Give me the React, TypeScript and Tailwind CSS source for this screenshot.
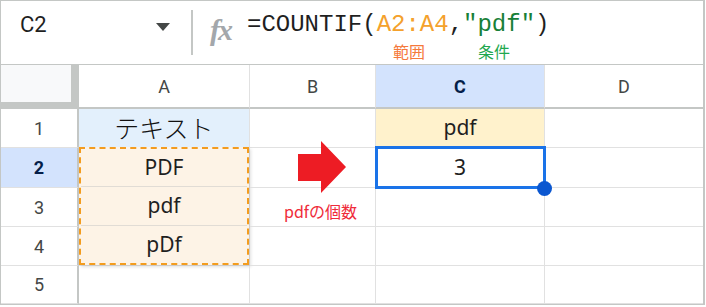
import React from "react";

const headFont = { fontFamily: "Roboto, 'Liberation Sans', Arial, sans-serif" };

function ColHead({ label, active, last }: { label: string; active?: boolean; last?: boolean }) {
  return (
    <div
      className={`flex items-center justify-center border-b-2 border-b-[#c4c7c5] text-[18px] ${
        last ? "" : "border-r border-r-[#e1e1e1]"
      } ${active ? "bg-[#d3e3fd] font-bold text-[#041e49]" : "text-[#444746]"}`}
      style={headFont}
    >
      {label}
    </div>
  );
}

function RowHead({ n, active }: { n: number; active?: boolean }) {
  return (
    <div
      className={`flex items-center justify-center border-r-2 border-r-[#c4c7c5] border-b border-b-[#e1e1e1] text-[18px] ${
        active ? "bg-[#d3e3fd] font-bold text-[#041e49]" : "text-[#444746]"
      }`}
      style={headFont}
    >
      {n}
    </div>
  );
}

function Cell({ className = "", children }: { className?: string; children?: React.ReactNode }) {
  return (
    <div className={`flex items-center justify-center border-r border-b border-[#e1e1e1] ${className}`}>
      {children}
    </div>
  );
}

export default function App() {
  return (
    <div
      className="relative w-[705px] h-[305px] bg-white border border-r-2 border-[#c4c7c5] flex flex-col overflow-hidden text-[#1f1f1f]"
      style={{ fontFamily: "'Noto Sans', 'Noto Sans CJK JP', sans-serif" }}
    >
      {/* formula bar */}
      <div className="h-[64px] shrink-0 border-b border-[#c4c7c5] flex items-start">
        <div className="w-[190px] h-full flex items-start pt-[9px] pl-[19px]">
          <span className="text-[22px] leading-[30px] text-[#1f1f1f]" style={headFont}>
            C2
          </span>
          <span className="ml-auto mr-[21px] mt-[13px] w-0 h-0 border-l-[7px] border-r-[7px] border-t-[8px] border-l-transparent border-r-transparent border-t-[#444746]" />
        </div>
        <div className="w-[2px] h-[45px] mt-[9px] bg-[#c4c7c5]" />
        <div
          className="ml-[17px] mt-[12px] text-[30px] leading-[34px] italic font-bold text-[#a3a7ab] tracking-[-2px]"
          style={{ fontFamily: "'Liberation Serif', 'DejaVu Serif', serif" }}
        >
          fx
        </div>
        <div className="ml-[16px] flex flex-col">
          <div
            className="text-[24px] leading-[30px] mt-[9px] whitespace-pre"
            style={{ fontFamily: "'Liberation Mono', 'DejaVu Sans Mono', monospace" }}
          >
            <span>=COUNTIF(</span>
            <span className="text-[#f4a12c]">A2:A4</span>
            <span>,</span>
            <span className="text-[#188038]">"pdf"</span>
            <span>)</span>
          </div>
          <div className="flex text-[16px] leading-[20px] mt-[1px]" style={{ fontFamily: "'Noto Sans CJK JP', sans-serif" }}>
            <span className="ml-[146px] text-[#f5793b]">範囲</span>
            <span className="ml-[53px] text-[#1fa84f]">条件</span>
          </div>
        </div>
      </div>

      {/* grid */}
      <div className="relative flex-1 grid grid-cols-[78px_171px_126px_169px_1fr] grid-rows-[44px_39px_40px_39px_39px_1fr]">
        <div className="bg-[#c4c7c5]">
          <div className="w-[70px] h-[37px] bg-[#f8f9fa]" />
        </div>
        <ColHead label="A" />
        <ColHead label="B" />
        <ColHead label="C" active />
        <ColHead label="D" last />

        <RowHead n={1} />
        <Cell className="bg-[#e3f0fc]">
          <span className="text-[25px] font-light text-[#111]" style={{ fontFamily: "'Noto Sans CJK JP', sans-serif" }}>
            テキスト
          </span>
        </Cell>
        <Cell />
        <Cell className="bg-[#fff2cc] text-[21px]">pdf</Cell>
        <Cell className="border-r-0" />

        <RowHead n={2} active />
        <div className="row-span-3 border-r border-b border-[#e1e1e1] bg-white">
          <div className="h-[calc(100%+1px)] -mt-[1px] border-[2px] border-dashed border-[#f39c1f] bg-[#fdf3e6] flex flex-col text-[21px] shadow-[2px_2px_3px_rgba(0,0,0,0.12)]">
            <div className="flex-1 flex items-center justify-center border-b border-[#e1dcd5]">PDF</div>
            <div className="flex-1 flex items-center justify-center border-b border-[#e1dcd5]">pdf</div>
            <div className="flex-1 flex items-center justify-center">pDf</div>
          </div>
        </div>
        <Cell />
        <Cell className="relative text-[21px]">
          <div className="absolute -left-[1px] -top-[2px] -right-[2px] -bottom-[2px] border-[3px] border-[#1a73e8]" />
          <span className="relative">3</span>
          <div className="absolute -right-[8px] -bottom-[9px] w-[15px] h-[15px] rounded-full bg-[#0b57d0]" />
        </Cell>
        <Cell className="border-r-0" />

        <RowHead n={3} />
        <Cell />
        <Cell />
        <Cell className="border-r-0" />

        <RowHead n={4} />
        <Cell />
        <Cell />
        <Cell className="border-r-0" />

        <RowHead n={5} />
        <Cell />
        <Cell />
        <Cell />
        <Cell className="border-r-0" />

        {/* arrow annotation */}
        <svg className="absolute left-[297px] top-[76px]" width="49" height="54" viewBox="0 0 49 54">
          <polygon points="0,13 23,13 23,0 48,26 23,52 23,40 0,40" fill="#ed1c24" />
        </svg>
        <div
          className="absolute left-[283px] top-[136px] text-[16px] leading-[20px] text-[#ef2b3a]"
          style={{ fontFamily: "'Noto Sans CJK JP', sans-serif" }}
        >
          pdfの個数
        </div>
      </div>
    </div>
  );
}
